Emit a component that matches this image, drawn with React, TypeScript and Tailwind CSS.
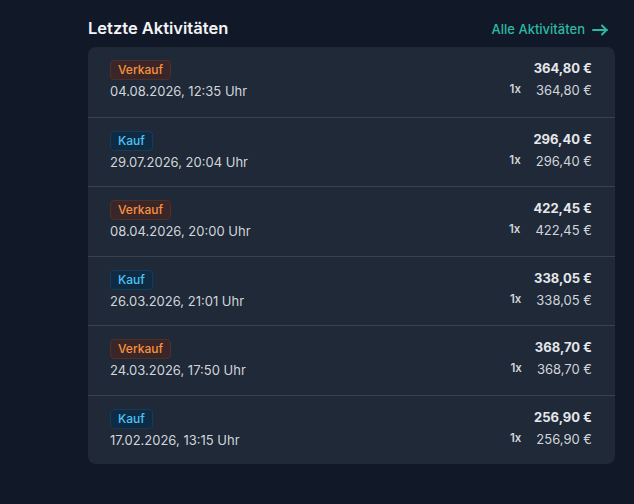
import React from 'react';

type Activity = {
  type: 'Verkauf' | 'Kauf';
  date: string;
  total: string;
  qty: number;
  price: string;
};

const activities: Activity[] = [
  { type: 'Verkauf', date: '04.08.2026, 12:35 Uhr', total: '364,80 €', qty: 1, price: '364,80 €' },
  { type: 'Kauf', date: '29.07.2026, 20:04 Uhr', total: '296,40 €', qty: 1, price: '296,40 €' },
  { type: 'Verkauf', date: '08.04.2026, 20:00 Uhr', total: '422,45 €', qty: 1, price: '422,45 €' },
  { type: 'Kauf', date: '26.03.2026, 21:01 Uhr', total: '338,05 €', qty: 1, price: '338,05 €' },
  { type: 'Verkauf', date: '24.03.2026, 17:50 Uhr', total: '368,70 €', qty: 1, price: '368,70 €' },
  { type: 'Kauf', date: '17.02.2026, 13:15 Uhr', total: '256,90 €', qty: 1, price: '256,90 €' },
];

const Badge = ({ type }: { type: Activity['type'] }) => (
  <span
    className={`flex items-center h-[20px] px-[7px] rounded-[4px] border text-[12px] font-medium leading-none ${
      type === 'Verkauf'
        ? 'bg-[#3a2628] border-[#4f3027] text-[#fb923c]'
        : 'bg-[#0f2b44] border-[#163b58] text-[#4cc3f5]'
    }`}
  >
    {type}
  </span>
);

const App = () => {
  return (
    <div className="min-h-[504px] w-full bg-[#111827] font-['Inter','Noto_Sans',sans-serif]">
      <div className="ml-[88px] w-[527px] pt-[16px]">
        {/* header */}
        <div className="flex items-center justify-between h-[24px] pr-[7px]">
          <p className="text-[16.5px] font-semibold text-[#f3f4f6]">Letzte Aktivitäten</p>
          <button className="flex items-center gap-[7px] mt-[3px] text-[13px] font-medium text-[#2bb9a4]">
            Alle Aktivitäten
            <svg width="16" height="12" viewBox="0 0 16 12" fill="none" stroke="currentColor" strokeWidth="2" strokeLinecap="round" strokeLinejoin="round">
              <path d="M1 6h14M10 1.5l4.5 4.5-4.5 4.5" />
            </svg>
          </button>
        </div>

        {/* card */}
        <div className="mt-[7px] bg-[#1f2937] rounded-[8px] overflow-hidden">
          {activities.map((a, idx) => (
            <div
              key={idx}
              className={`flex items-start justify-between h-[69.5px] pl-[22px] pr-[23px] pt-[13px] ${
                idx > 0 ? 'border-t border-[#374151]' : ''
              }`}
            >
              <div className="flex flex-col items-start">
                <Badge type={a.type} />
                <p className="mt-[1px] text-[13px] leading-[20px] text-[#d1d5db]">{a.date}</p>
              </div>
              <div className="flex flex-col items-end -mt-[1px]">
                <p className="text-[13px] leading-[18px] font-bold text-[#e5e7eb]">{a.total}</p>
                <div className="flex items-center mt-[4px]">
                  <span className="text-[11.5px] font-semibold text-[#d1d5db] mr-[15px]">{a.qty}x</span>
                  <span className="text-[13px] leading-[18px] text-[#d1d5db]">{a.price}</span>
                </div>
              </div>
            </div>
          ))}
        </div>
      </div>
    </div>
  );
};

export default App;
